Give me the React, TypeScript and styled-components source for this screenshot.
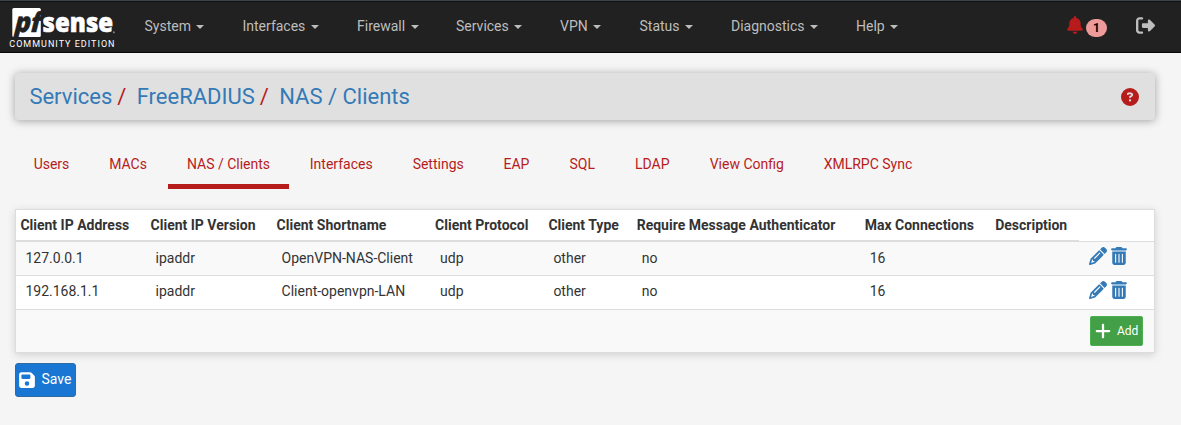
import React from "react";
import styled, { createGlobalStyle } from "styled-components";
import {
  FaBell,
  FaCircleQuestion,
  FaFloppyDisk,
  FaPencil,
  FaPlus,
  FaRightFromBracket,
  FaTrashCan,
} from "react-icons/fa6";

const GlobalStyle = createGlobalStyle`
  *, *::before, *::after { box-sizing: border-box; }
  body {
    margin: 0;
    background: #f5f5f5;
    color: #333;
    font: 14px/20px Roboto, "Liberation Sans", sans-serif;
  }
`;

const Navbar = styled.nav`
  display: flex;
  height: 53px;
  background: #212121;
  border-top: 1px solid #3c434c;
  border-bottom: 1px solid #080808;
  box-shadow: inset 0 1px 0 #111;
`;

const Brand = styled.a`
  display: block;
  width: 129.5px;
  height: 51px;
`;

const Menu = styled.div`
  display: flex;
  flex: 1;
`;

const MenuItem = styled.a<{ $width: number }>`
  display: flex;
  align-items: center;
  width: ${(p) => p.$width}px;
  height: 49px;
  padding-left: 15px;
  color: #bdbdbd;
  white-space: nowrap;
`;

const Caret = styled.span`
  margin: 2px 0 0 5.5px;
  border-top: 4px solid;
  border-right: 4px solid transparent;
  border-left: 4px solid transparent;
`;

const Alerts = styled.a`
  display: flex;
  align-items: flex-start;
  gap: 2.5px;
  padding-top: 15px;
  margin-right: 29px;
  color: #b71c1c;
`;

const Badge = styled.span`
  width: 21px;
  height: 18px;
  margin-top: 3px;
  border-radius: 10px;
  background: #ef9a9a;
  color: #000;
  font-size: 12px;
  font-weight: 700;
  line-height: 18px;
  text-align: center;
`;

const Logout = styled.a`
  display: block;
  padding-top: 15px;
  margin-right: 26px;
  color: #bdbdbd;
`;

const Main = styled.main`
  padding: 20px 26px 0 15px;
`;

const Header = styled.header`
  display: flex;
  align-items: center;
  justify-content: space-between;
  width: 1140px;
  height: 47px;
  padding: 0 16px 0 14.4px;
  border-radius: 4px;
  background: #e0e0e0;
  box-shadow: 0 1px 8px rgba(0, 0, 0, 0.35);
`;

const Crumbs = styled.div`
  display: flex;
  font-size: 22px;
  line-height: 24px;
  color: #337ab7;
  white-space: pre;
`;

const Slash = styled.span`
  margin: 0 10.3px 0 5px;
  color: #b71c1c;
`;

const Help = styled.a`
  display: flex;
  color: #b71c1c;
`;

const Tabs = styled.div`
  display: flex;
  height: 48px;
  margin-top: 21px;
`;

const Tab = styled.a<{ $width: number; $active?: boolean }>`
  width: ${(p) => p.$width}px;
  padding-top: 13px;
  border-bottom: 5px solid ${(p) => (p.$active ? "#b71c1c" : "transparent")};
  color: #b71c1c;
  text-align: center;
  white-space: nowrap;
`;

const Panel = styled.section`
  width: 1140px;
  margin-top: 20px;
  border: 1px solid #ddd;
  background: #fff;
  box-shadow: 0 2px 8px rgba(0, 0, 0, 0.15);
`;

const Row = styled.div<{ $shaded?: boolean }>`
  display: grid;
  grid-template-columns: 130.2px 126px 158.5px 113.3px 88.3px 228px 130.5px 88.7px 74.5px;
  height: 34px;
  border-bottom: 1px solid #ddd;
  background: ${(p) => (p.$shaded ? "#f9f9f9" : "#fff")};
`;

const HeadRow = styled(Row)`
  height: 32px;
  border-bottom: 0;
`;

const HeadCell = styled.div`
  padding: 5px 0 0 4.4px;
  border-bottom: 2px solid #ddd;
  font-weight: 700;
  white-space: nowrap;
`;

const ActionsHead = styled.div`
  border-bottom: 1px solid #ddd;
`;

const Cell = styled.div<{ $top: number }>`
  padding: ${(p) => p.$top}px 0 0 9.4px;
  white-space: nowrap;
`;

const Actions = styled.div`
  display: flex;
  gap: 3.5px;
  padding: 5px 0 0 10px;
  color: #337ab7;

  svg + svg {
    width: 16px;
  }
`;

const Footer = styled.div`
  display: flex;
  justify-content: flex-end;
  height: 42px;
  padding: 6px 11px 0 0;
  background: #f9f9f9;
`;

const AddButton = styled.button`
  display: flex;
  align-items: center;
  gap: 5px;
  width: 53px;
  height: 30px;
  padding: 0 0 0 3px;
  border: 1px solid #4caf50;
  border-radius: 2px;
  background: #43a047;
  color: #fff;
  font: 12px/18px Roboto, sans-serif;
`;

const SaveButton = styled.button`
  display: flex;
  align-items: center;
  gap: 6px;
  width: 61px;
  height: 34px;
  margin-top: 10px;
  padding: 0 0 0 3.4px;
  border: 1px solid #2e6da4;
  border-radius: 3px;
  background: #1976d2;
  color: #fff;
  font: 14px/20px Roboto, sans-serif;

  svg {
    width: 16px;
  }
`;

const Label = styled.span<{ $lift?: number }>`
  padding-bottom: ${(p) => p.$lift ?? 0}px;
`;

const menus: [string, number][] = [
  ["System", 98],
  ["Interfaces", 114.5],
  ["Firewall", 99],
  ["Services", 104],
  ["VPN", 79.5],
  ["Status", 91.5],
  ["Diagnostics", 125],
  ["Help", 70],
];

const tabs: [string, number][] = [
  ["Users", 73],
  ["MACs", 80],
  ["NAS / Clients", 121],
  ["Interfaces", 104.4],
  ["Settings", 89.6],
  ["EAP", 66.8],
  ["SQL", 65],
  ["LDAP", 75],
  ["View Config", 114],
  ["XMLRPC Sync", 128.4],
];

const heads = [
  "Client IP Address",
  "Client IP Version",
  "Client Shortname",
  "Client Protocol",
  "Client Type",
  "Require Message Authenticator",
  "Max Connections",
  "Description",
];

const clients = [
  ["127.0.0.1", "ipaddr", "OpenVPN-NAS-Client", "udp", "other", "no", "16", ""],
  ["192.168.1.1", "ipaddr", "Client-openvpn-LAN", "udp", "other", "no", "16", ""],
];

function Logo() {
  return (
    <svg width="129" height="51" viewBox="0 1 129 51" fontFamily='"Open Sans", sans-serif' fontWeight="800">
      <rect x="12.3" y="8" width="28.5" height="29" rx="1.5" fill="#fff" />
      <text
        transform="translate(13.3 31.7) skewX(-14)"
        fontSize="27.5"
        fill="#212121"
        stroke="#212121"
        strokeWidth="0.5"
        textLength="26"
        lengthAdjust="spacingAndGlyphs"
      >
        pf
      </text>
      <text
        x="42.6"
        y="32"
        fontSize="26.5"
        fill="#fff"
        stroke="#fff"
        strokeWidth="0.6"
        textLength="70.5"
        lengthAdjust="spacingAndGlyphs"
      >
        sense
      </text>
      <rect x="113" y="31.5" width="1.7" height="1.7" fill="#888" />
      <text x="9.3" y="47" fontSize="9" fontWeight="400" fill="#fff" fontFamily="Roboto, sans-serif" textLength="105.2">
        COMMUNITY EDITION
      </text>
    </svg>
  );
}

export default function App() {
  return (
    <>
      <GlobalStyle />
      <Navbar>
        <Brand><Logo /></Brand>
        <Menu>
          {menus.map(([name, width]) => (
            <MenuItem key={name} $width={width}>{name}<Caret /></MenuItem>
          ))}
        </Menu>
        <Alerts><FaBell size={18} /><Badge>1</Badge></Alerts>
        <Logout><FaRightFromBracket size={19} /></Logout>
      </Navbar>
      <Main>
        <Header>
          <Crumbs>
            Services<Slash>/</Slash>FreeRADIUS<Slash>/</Slash>NAS / Clients
          </Crumbs>
          <Help><FaCircleQuestion size={18} /></Help>
        </Header>
        <Tabs>
          {tabs.map(([name, width]) => (
            <Tab key={name} $width={width} $active={name === "NAS / Clients"}>{name}</Tab>
          ))}
        </Tabs>
        <Panel>
          <HeadRow>
            {heads.map((h) => <HeadCell key={h}>{h}</HeadCell>)}
            <ActionsHead />
          </HeadRow>
          {clients.map((c, i) => (
            <Row key={c[0]} $shaded={i === 0}>
              {c.map((v, j) => <Cell key={j} $top={6 - i}>{v}</Cell>)}
              <Actions><FaPencil size={18} /><FaTrashCan size={18} /></Actions>
            </Row>
          ))}
          <Footer>
            <AddButton><FaPlus size={18} /><Label>Add</Label></AddButton>
          </Footer>
        </Panel>
        <SaveButton><FaFloppyDisk size={18} /><Label $lift={2}>Save</Label></SaveButton>
      </Main>
    </>
  );
}
